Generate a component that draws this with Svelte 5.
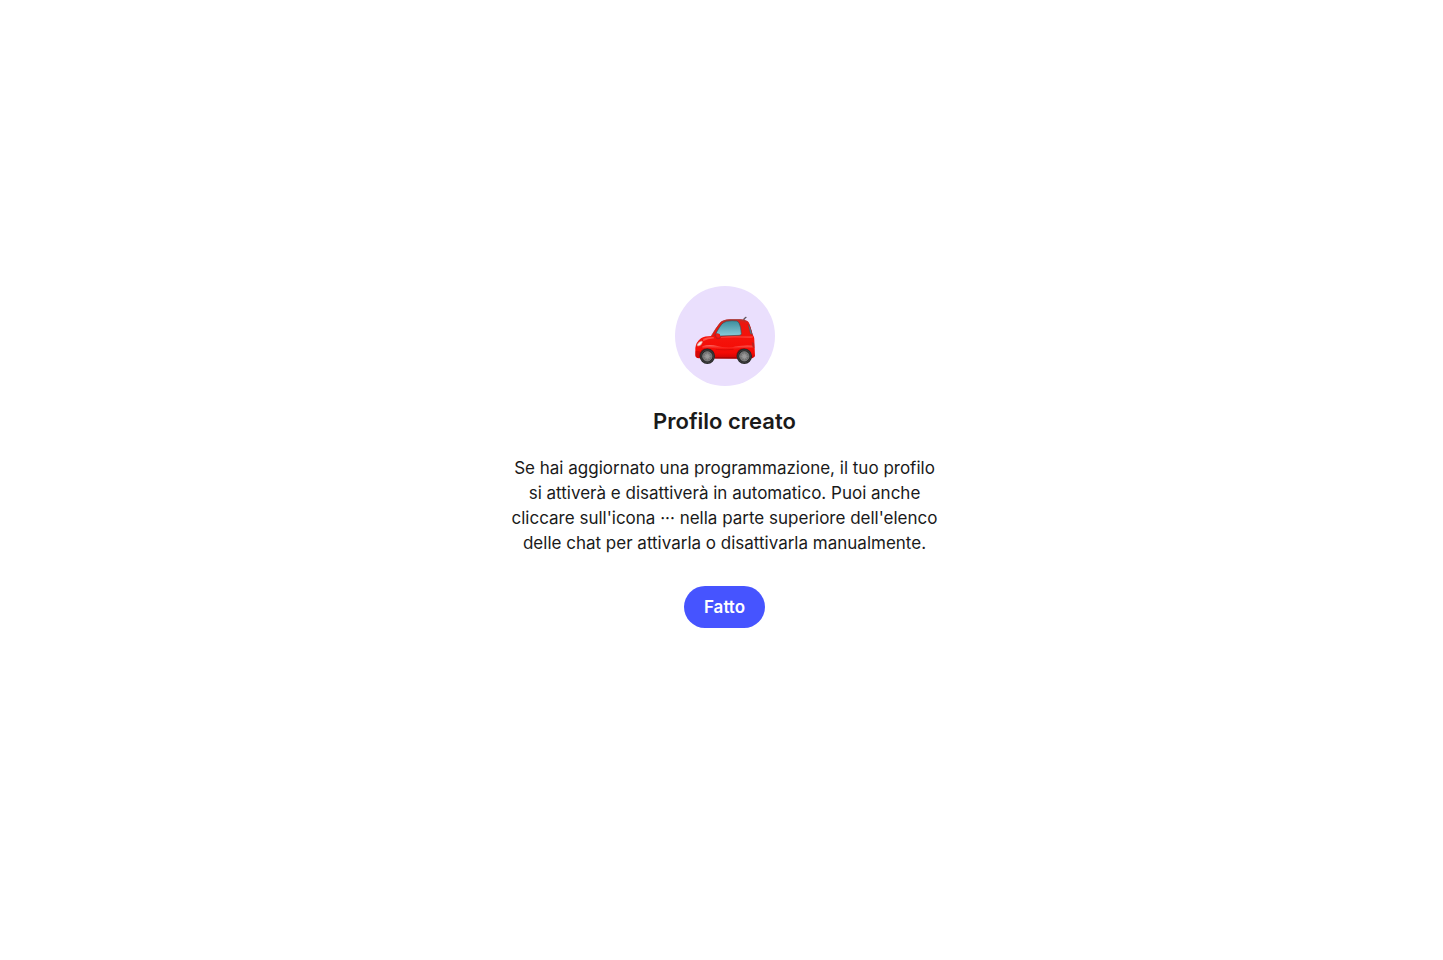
<script>
	export let title = 'Profilo creato';
	export let buttonLabel = 'Fatto';
	export let onDone = () => {};
</script>

<main class="wrapper">
	<section class="profile-created">
		<div class="avatar">
			<svg class="car" viewBox="0 0 180 144" aria-hidden="true">
				<defs>
					<linearGradient id="body" x1="0" y1="0" x2="0" y2="1">
						<stop offset="0" stop-color="#ce2620" />
						<stop offset="0.12" stop-color="#ed160d" />
						<stop offset="0.5" stop-color="#f5130b" />
						<stop offset="0.85" stop-color="#f40a05" />
						<stop offset="1" stop-color="#c90404" />
					</linearGradient>
					<linearGradient id="glass" x1="0" y1="0" x2="0" y2="1">
						<stop offset="0" stop-color="#3d8d9c" />
						<stop offset="1" stop-color="#8accda" />
					</linearGradient>
					<linearGradient id="side" x1="0" y1="0" x2="0" y2="1">
						<stop offset="0" stop-color="#ff827b" />
						<stop offset="1" stop-color="#fa1710" stop-opacity="0" />
					</linearGradient>
					<radialGradient id="hub">
						<stop offset="0" stop-color="#aaa" />
						<stop offset="0.5" stop-color="#858585" />
						<stop offset="1" stop-color="#606060" />
					</radialGradient>
				</defs>
				<path d="M144 15 L150 6 M147 9 L153 4" stroke="#62575f" stroke-width="4" stroke-linecap="round" />
				<path d="M145 12 Q159 15 164 28 L175 61 L164 65Z" fill="#6b2a30" />
				<path
					d="M49 60 Q65 32 76 19 Q84 11 104 10 L136 10 Q155 11 161 19 Q168 33 172 57 Q178 60 178 73 L180 121 Q175 128 165 128 L12 127 Q0 126 1 116 L1 96 Q3 78 18 67 Q29 60 49 60Z"
					fill="url(#body)"
				/>
				<path d="M159 25 Q166 30 171 55 L166 53 Q163 38 159 25Z" fill="#4a8794" stroke="#6b2a30" stroke-width="1" />
				<path d="M48 61 Q65 32 77 20 Q85 12 104 11 L136 11 Q147 12 152 17" fill="none" stroke="#92443f" stroke-width="2" />
				<path d="M56 61 L78 28 Q84 19 98 16 L83 22 Q76 30 63 57Z" fill="#7d3e42" />
				<path d="M60 58 Q75 28 84 21 Q92 14 111 14 L126 15 Q133 17 137 35 L139 53 Q139 58 132 58 L78 60 Q66 62 60 58Z" fill="url(#glass)" stroke="#414b50" stroke-width="2" />
				<path d="M78 63 Q110 59 139 61 L174 61 Q177 66 167 66 Q120 63 78 66Z" fill="#ff6259" opacity="0.5" />
				<path d="M25 68 Q37 62 55 63 L58 67 Q37 69 24 76Z" fill="#ff6e64" opacity="0.65" />
				<path d="M22 91 Q42 84 67 90 Q80 95 112 94 Q133 87 174 89 L176 96 Q137 94 120 101 Q84 105 63 98 Q48 93 22 97Z" fill="url(#side)" opacity="0.8" />
				<path d="M62 100 Q90 103 116 100" fill="none" stroke="#d00906" stroke-width="2" />
				<path d="M7 85 Q12 76 21 75 Q24 78 18 86 Q12 91 7 90Z" fill="#f9eae6" stroke="#d88984" stroke-width="2" />
				<path d="M60 53 Q65 50 74 54 L77 65 Q73 71 65 69 Q58 63 60 53Z" fill="#c71b17" />
				<path d="M63 55 Q70 52 74 58 L75 64 Q68 67 64 62Z" fill="#f51b14" />
				<path d="M2 106 Q11 103 16 108 L16 125 Q2 126 2 116Z" fill="#d50707" />
				<path d="M170 79 L177 81 L178 96 L173 94Z" fill="#bd201c" />
				<path d="M59 126 L128 126" stroke="#910505" stroke-width="3" />
				<path d="M13 120 Q14 98 37 97 Q60 98 60 124Z M124 120 Q125 98 147 97 Q171 98 170 124Z" fill="#9b0907" />
				{#each [37, 148] as cx}
					<circle {cx} cy="121" r="23" fill="#282929" />
					<circle {cx} cy="121" r="19" fill="none" stroke="#454545" stroke-width="2" />
					<circle {cx} cy="121" r="14" fill="url(#hub)" stroke="#999" stroke-width="2" />
					<path
						d="M{cx} 109 V133 M{cx - 12} 121 H{cx + 12} M{cx - 8} 113 L{cx + 8} 129 M{cx + 8} 113 L{cx - 8} 129"
						stroke="#b5b5b5"
						stroke-width="2"
						opacity="0.4"
					/>
					<circle {cx} cy="121" r="4" fill="#999" />
				{/each}
			</svg>
		</div>
		<h1>{title}</h1>
		<p>
			Se hai aggiornato una programmazione, il tuo profilo si attiverà e disattiverà in automatico.
			Puoi anche cliccare sull'icona ··· nella parte superiore dell'elenco delle chat per attivarla o
			disattivarla manualmente.
		</p>
		<button type="button" on:click={onDone}>{buttonLabel}</button>
	</section>
</main>

<style>
	:global(body) {
		background: #fff;
	}

	.wrapper {
		box-sizing: border-box;
		min-height: 100vh;
		padding: 0 0 46px 6px;
		display: flex;
		justify-content: center;
		align-items: center;
		font-family: Inter, 'Liberation Sans', sans-serif;
		color: #1a1a1a;
	}

	.profile-created {
		display: flex;
		flex-direction: column;
		align-items: center;
		max-width: 430px;
		text-align: center;
	}

	.avatar {
		display: flex;
		justify-content: center;
		align-items: center;
		width: 100px;
		height: 100px;
		border-radius: 50%;
		background: #eadffd;
	}

	.car {
		width: 60px;
		height: 48px;
		margin-top: 8px;
	}

	h1 {
		margin: 20px 0;
		font-size: 22px;
		line-height: 30px;
		font-weight: 600;
	}

	p {
		margin: 0 0 30px;
		font-size: 17px;
		line-height: 25px;
		font-weight: 400;
	}

	button {
		height: 42px;
		padding: 0 20px;
		border: none;
		border-radius: 21px;
		background: #4654ff;
		color: #fff;
		font-family: inherit;
		font-size: 17px;
		font-weight: 600;
		cursor: pointer;
	}

	button:hover {
		background: #3845e6;
	}
</style>
